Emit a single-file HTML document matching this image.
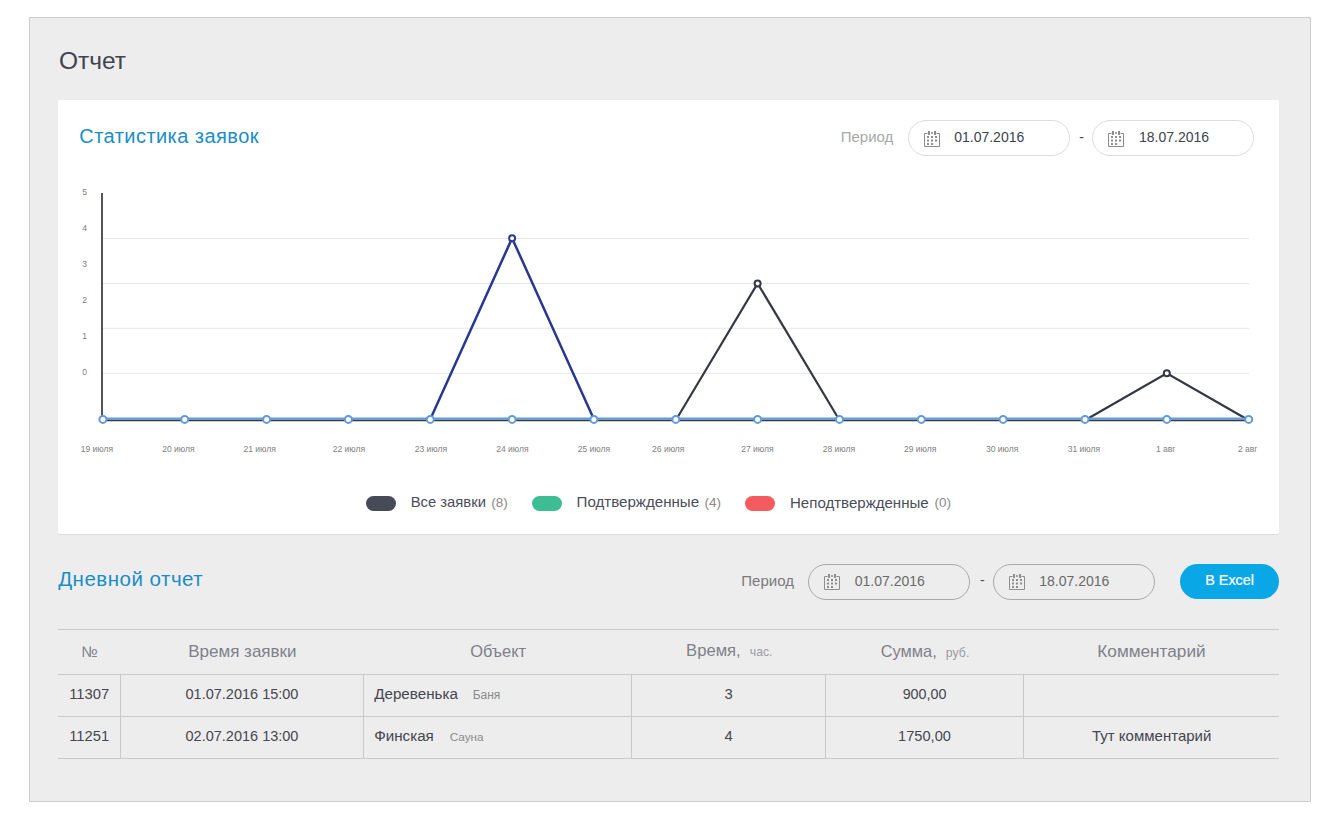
<!DOCTYPE html>
<html><head><meta charset="utf-8"><title>Отчет</title>
<style>
html,body{margin:0;padding:0;background:#fff;width:1340px;height:820px;overflow:hidden;font-family:"Liberation Sans", sans-serif;}
.t{position:absolute;white-space:pre;font-family:"Liberation Sans", sans-serif;}
.ic{position:absolute;}
.box{position:absolute;}
</style></head><body>
<div class="box" style="left:29px;top:17px;width:1280px;height:783px;background:#ededed;border:1px solid #cdcdcd;"></div>
<div class="t" style="left:59.00px;top:49.08px;font-size:24.5px;line-height:24.5px;color:#41444f;">Отчет</div>
<div class="box" style="left:58px;top:100px;width:1221px;height:434px;background:#fff;border-radius:2px;box-shadow:0 1px 1px rgba(0,0,0,0.07);"></div>
<div class="t" style="left:79.30px;top:125.70px;font-size:20px;line-height:20px;color:#1a8dc6;letter-spacing:0.45px;">Статистика заявок</div>
<div class="t" style="left:840.70px;top:128.55px;font-size:15px;line-height:15px;color:#a8a8a8;">Период</div>
<div class="box" style="left:908px;top:120px;width:160px;height:34px;border:1px solid #dcdcdc;border-radius:18px;"></div>
<svg class="ic" style="left:924px;top:131px" width="17" height="17" viewBox="0 0 17 17">
<path d="M3.5 2.5H0.5V15.5H15.5V2.5H12.5" fill="none" stroke="#8c8c8c" stroke-width="1"/>
<rect x="4" y="0" width="2" height="4" fill="#8c8c8c"/><rect x="7" y="1" width="2" height="2" fill="#8c8c8c" opacity="0.8"/><rect x="10" y="0" width="2" height="4" fill="#8c8c8c"/>
<g fill="#8c8c8c"><rect x="3" y="5" width="2" height="2"/><rect x="7" y="5" width="2" height="2"/><rect x="11" y="5" width="2" height="2"/>
<rect x="3" y="8.5" width="2" height="2"/><rect x="7" y="8.5" width="2" height="2"/><rect x="11" y="8.5" width="2" height="2"/>
<rect x="3" y="12" width="2" height="2"/><rect x="7" y="12" width="2" height="2"/></g></svg>
<div class="t" style="left:954.20px;top:130.30px;font-size:14px;line-height:14px;color:#3d4250;">01.07.2016</div>
<div class="t" style="left:1079.30px;top:129.60px;font-size:14px;line-height:14px;color:#3d4250;">-</div>
<div class="box" style="left:1092px;top:120px;width:160px;height:34px;border:1px solid #dcdcdc;border-radius:18px;"></div>
<svg class="ic" style="left:1108px;top:131px" width="17" height="17" viewBox="0 0 17 17">
<path d="M3.5 2.5H0.5V15.5H15.5V2.5H12.5" fill="none" stroke="#8c8c8c" stroke-width="1"/>
<rect x="4" y="0" width="2" height="4" fill="#8c8c8c"/><rect x="7" y="1" width="2" height="2" fill="#8c8c8c" opacity="0.8"/><rect x="10" y="0" width="2" height="4" fill="#8c8c8c"/>
<g fill="#8c8c8c"><rect x="3" y="5" width="2" height="2"/><rect x="7" y="5" width="2" height="2"/><rect x="11" y="5" width="2" height="2"/>
<rect x="3" y="8.5" width="2" height="2"/><rect x="7" y="8.5" width="2" height="2"/><rect x="11" y="8.5" width="2" height="2"/>
<rect x="3" y="12" width="2" height="2"/><rect x="7" y="12" width="2" height="2"/></g></svg>
<div class="t" style="left:1139.00px;top:130.30px;font-size:14px;line-height:14px;color:#3d4250;">18.07.2016</div>
<svg class="ic" style="left:0;top:0" width="1340" height="820" viewBox="0 0 1340 820">
<line x1="103" y1="238.5" x2="1249" y2="238.5" stroke="#e6e6e6" stroke-width="1"/>
<line x1="103" y1="283.5" x2="1249" y2="283.5" stroke="#e6e6e6" stroke-width="1"/>
<line x1="103" y1="328.3" x2="1249" y2="328.3" stroke="#e6e6e6" stroke-width="1"/>
<line x1="103" y1="373.3" x2="1249" y2="373.3" stroke="#e6e6e6" stroke-width="1"/>
<line x1="102" y1="193" x2="102" y2="420.2" stroke="#555" stroke-width="2"/>
<polyline points="675.8,420.2 757.6,283.4 839.5,420.2" fill="none" stroke="#353943" stroke-width="2.2" stroke-linejoin="miter"/>
<polyline points="1085.0,420.2 1166.8,373.3 1248.7,420.2" fill="none" stroke="#353943" stroke-width="2.2" stroke-linejoin="miter"/>
<polyline points="430.3,419.2 512.1,238.2 593.9,419.2" fill="none" stroke="#28378f" stroke-width="2.5"/>
<line x1="102.9" y1="420.3" x2="1248.66" y2="420.3" stroke="#353943" stroke-width="1.8"/>
<line x1="102.9" y1="418.59999999999997" x2="1248.66" y2="418.59999999999997" stroke="#5e9de0" stroke-width="2"/>
<circle cx="102.9" cy="419.4" r="3.5" fill="#fff" stroke="#6399da" stroke-width="2"/>
<circle cx="184.7" cy="419.4" r="3.5" fill="#fff" stroke="#6399da" stroke-width="2"/>
<circle cx="266.6" cy="419.4" r="3.5" fill="#fff" stroke="#6399da" stroke-width="2"/>
<circle cx="348.4" cy="419.4" r="3.5" fill="#fff" stroke="#6399da" stroke-width="2"/>
<circle cx="430.3" cy="419.4" r="3.5" fill="#fff" stroke="#6399da" stroke-width="2"/>
<circle cx="512.1" cy="419.4" r="3.5" fill="#fff" stroke="#6399da" stroke-width="2"/>
<circle cx="593.9" cy="419.4" r="3.5" fill="#fff" stroke="#6399da" stroke-width="2"/>
<circle cx="675.8" cy="419.4" r="3.5" fill="#fff" stroke="#6399da" stroke-width="2"/>
<circle cx="757.6" cy="419.4" r="3.5" fill="#fff" stroke="#6399da" stroke-width="2"/>
<circle cx="839.5" cy="419.4" r="3.5" fill="#fff" stroke="#6399da" stroke-width="2"/>
<circle cx="921.3" cy="419.4" r="3.5" fill="#fff" stroke="#6399da" stroke-width="2"/>
<circle cx="1003.1" cy="419.4" r="3.5" fill="#fff" stroke="#6399da" stroke-width="2"/>
<circle cx="1085.0" cy="419.4" r="3.5" fill="#fff" stroke="#6399da" stroke-width="2"/>
<circle cx="1166.8" cy="419.4" r="3.5" fill="#fff" stroke="#6399da" stroke-width="2"/>
<circle cx="1248.7" cy="419.4" r="3.5" fill="#fff" stroke="#6399da" stroke-width="2"/>
<circle cx="512.1" cy="238.2" r="3" fill="#fff" stroke="#2a3a92" stroke-width="2"/>
<circle cx="757.6" cy="283.4" r="3" fill="#fff" stroke="#353943" stroke-width="2"/>
<circle cx="1166.8" cy="373.3" r="3" fill="#fff" stroke="#353943" stroke-width="2"/>
</svg>
<div class="t" style="left:82.20px;top:187.97px;font-size:8.5px;line-height:8.5px;color:#7c7c7c;">5</div>
<div class="t" style="left:82.20px;top:223.97px;font-size:8.5px;line-height:8.5px;color:#7c7c7c;">4</div>
<div class="t" style="left:82.20px;top:259.97px;font-size:8.5px;line-height:8.5px;color:#7c7c7c;">3</div>
<div class="t" style="left:82.20px;top:296.47px;font-size:8.5px;line-height:8.5px;color:#7c7c7c;">2</div>
<div class="t" style="left:82.20px;top:332.47px;font-size:8.5px;line-height:8.5px;color:#7c7c7c;">1</div>
<div class="t" style="left:82.20px;top:368.47px;font-size:8.5px;line-height:8.5px;color:#7c7c7c;">0</div>
<div class="t" style="left:80.80px;top:445.38px;font-size:8.5px;line-height:8.5px;color:#808080;">19 июля</div>
<div class="t" style="left:162.30px;top:445.38px;font-size:8.5px;line-height:8.5px;color:#808080;">20 июля</div>
<div class="t" style="left:243.50px;top:445.38px;font-size:8.5px;line-height:8.5px;color:#808080;">21 июля</div>
<div class="t" style="left:332.70px;top:445.38px;font-size:8.5px;line-height:8.5px;color:#808080;">22 июля</div>
<div class="t" style="left:414.80px;top:445.38px;font-size:8.5px;line-height:8.5px;color:#808080;">23 июля</div>
<div class="t" style="left:496.30px;top:445.38px;font-size:8.5px;line-height:8.5px;color:#808080;">24 июля</div>
<div class="t" style="left:577.80px;top:445.38px;font-size:8.5px;line-height:8.5px;color:#808080;">25 июля</div>
<div class="t" style="left:652.10px;top:445.38px;font-size:8.5px;line-height:8.5px;color:#808080;">26 июля</div>
<div class="t" style="left:741.30px;top:445.38px;font-size:8.5px;line-height:8.5px;color:#808080;">27 июля</div>
<div class="t" style="left:822.80px;top:445.38px;font-size:8.5px;line-height:8.5px;color:#808080;">28 июля</div>
<div class="t" style="left:904.00px;top:445.38px;font-size:8.5px;line-height:8.5px;color:#808080;">29 июля</div>
<div class="t" style="left:986.00px;top:445.38px;font-size:8.5px;line-height:8.5px;color:#808080;">30 июля</div>
<div class="t" style="left:1067.80px;top:445.38px;font-size:8.5px;line-height:8.5px;color:#808080;">31 июля</div>
<div class="t" style="left:1156.00px;top:445.38px;font-size:8.5px;line-height:8.5px;color:#808080;">1 авг</div>
<div class="t" style="left:1237.90px;top:445.38px;font-size:8.5px;line-height:8.5px;color:#808080;">2 авг</div>
<div class="box" style="left:366px;top:496px;width:30px;height:15px;border-radius:8px;background:#474a57;"></div>
<div class="t" style="left:410.70px;top:494.72px;font-size:14.8px;line-height:14.8px;color:#4a4d5a;">Все заявки</div>
<div class="t" style="left:491.30px;top:495.82px;font-size:13.5px;line-height:13.5px;color:#8a8a8a;">(8)</div>
<div class="box" style="left:532px;top:496px;width:30px;height:15px;border-radius:8px;background:#3dbd94;"></div>
<div class="t" style="left:576.60px;top:494.47px;font-size:15.1px;line-height:15.1px;color:#4a4d5a;">Подтвержденные</div>
<div class="t" style="left:704.50px;top:495.82px;font-size:13.5px;line-height:13.5px;color:#8a8a8a;">(4)</div>
<div class="box" style="left:745px;top:496px;width:30px;height:15px;border-radius:8px;background:#f45b5e;"></div>
<div class="t" style="left:790.00px;top:494.50px;font-size:15.06px;line-height:15.06px;color:#4a4d5a;">Неподтвержденные</div>
<div class="t" style="left:934.60px;top:495.82px;font-size:13.5px;line-height:13.5px;color:#8a8a8a;">(0)</div>
<div class="t" style="left:58.20px;top:569.48px;font-size:20.5px;line-height:20.5px;color:#1a8dc6;letter-spacing:0.5px;">Дневной отчет</div>
<div class="t" style="left:741.30px;top:572.55px;font-size:15px;line-height:15px;color:#7a7a7a;">Период</div>
<div class="box" style="left:808px;top:564px;width:160px;height:34px;border:1px solid #a9a9a9;border-radius:18px;"></div>
<svg class="ic" style="left:824px;top:574px" width="17" height="17" viewBox="0 0 17 17">
<path d="M3.5 2.5H0.5V15.5H15.5V2.5H12.5" fill="none" stroke="#8f8f8f" stroke-width="1"/>
<rect x="4" y="0" width="2" height="4" fill="#8f8f8f"/><rect x="7" y="1" width="2" height="2" fill="#8f8f8f" opacity="0.8"/><rect x="10" y="0" width="2" height="4" fill="#8f8f8f"/>
<g fill="#8f8f8f"><rect x="3" y="5" width="2" height="2"/><rect x="7" y="5" width="2" height="2"/><rect x="11" y="5" width="2" height="2"/>
<rect x="3" y="8.5" width="2" height="2"/><rect x="7" y="8.5" width="2" height="2"/><rect x="11" y="8.5" width="2" height="2"/>
<rect x="3" y="12" width="2" height="2"/><rect x="7" y="12" width="2" height="2"/></g></svg>
<div class="t" style="left:854.80px;top:573.80px;font-size:14px;line-height:14px;color:#6a6a6a;">01.07.2016</div>
<div class="t" style="left:980.00px;top:573.10px;font-size:14px;line-height:14px;color:#555;">-</div>
<div class="box" style="left:993px;top:564px;width:160px;height:34px;border:1px solid #a9a9a9;border-radius:18px;"></div>
<svg class="ic" style="left:1009px;top:574px" width="17" height="17" viewBox="0 0 17 17">
<path d="M3.5 2.5H0.5V15.5H15.5V2.5H12.5" fill="none" stroke="#8f8f8f" stroke-width="1"/>
<rect x="4" y="0" width="2" height="4" fill="#8f8f8f"/><rect x="7" y="1" width="2" height="2" fill="#8f8f8f" opacity="0.8"/><rect x="10" y="0" width="2" height="4" fill="#8f8f8f"/>
<g fill="#8f8f8f"><rect x="3" y="5" width="2" height="2"/><rect x="7" y="5" width="2" height="2"/><rect x="11" y="5" width="2" height="2"/>
<rect x="3" y="8.5" width="2" height="2"/><rect x="7" y="8.5" width="2" height="2"/><rect x="11" y="8.5" width="2" height="2"/>
<rect x="3" y="12" width="2" height="2"/><rect x="7" y="12" width="2" height="2"/></g></svg>
<div class="t" style="left:1039.30px;top:573.80px;font-size:14px;line-height:14px;color:#6a6a6a;">18.07.2016</div>
<div class="box" style="left:1180px;top:564px;width:99px;height:35px;border-radius:18px;background:#0aa7e6;"></div>
<div class="t" style="left:1205.20px;top:573.06px;font-size:14.4px;line-height:14.4px;color:#ffffff;-webkit-text-stroke:0.2px #fff;">B Excel</div>
<div class="box" style="left:58px;top:629px;width:1221px;height:1px;background:#c9c9c9;"></div>
<div class="box" style="left:58px;top:674px;width:1221px;height:1px;background:#c9c9c9;"></div>
<div class="box" style="left:58px;top:716px;width:1221px;height:1px;background:#c9c9c9;"></div>
<div class="box" style="left:58px;top:758px;width:1221px;height:1px;background:#c9c9c9;"></div>
<div class="box" style="left:120px;top:675px;width:1px;height:83px;background:#c9c9c9;"></div>
<div class="box" style="left:363px;top:675px;width:1px;height:83px;background:#c9c9c9;"></div>
<div class="box" style="left:631px;top:675px;width:1px;height:83px;background:#c9c9c9;"></div>
<div class="box" style="left:825px;top:675px;width:1px;height:83px;background:#c9c9c9;"></div>
<div class="box" style="left:1023px;top:675px;width:1px;height:83px;background:#c9c9c9;"></div>
<div class="t" style="left:-110.30px;width:400px;text-align:center;top:644.31px;font-size:15.4px;line-height:15.4px;color:#7e808a;">№</div>
<div class="t" style="left:42.40px;width:400px;text-align:center;top:642.95px;font-size:17px;line-height:17px;color:#7e808a;">Время заявки</div>
<div class="t" style="left:298.20px;width:400px;text-align:center;top:643.46px;font-size:16.4px;line-height:16.4px;color:#7e808a;">Объект</div>
<div class="t" style="left:529.30px;width:400px;text-align:center;top:643.29px;font-size:16.6px;line-height:16.6px;color:#7e808a;">Время,  <span style="font-size:12.2px;color:#9c9ca4">час.</span></div>
<div class="t" style="left:725.00px;width:400px;text-align:center;top:643.46px;font-size:16.4px;line-height:16.4px;color:#7e808a;">Сумма,  <span style="font-size:12.3px;color:#9c9ca4">руб.</span></div>
<div class="t" style="left:951.50px;width:400px;text-align:center;top:642.78px;font-size:17.2px;line-height:17.2px;color:#7e808a;">Комментарий</div>
<div class="t" style="left:-110.80px;width:400px;text-align:center;top:686.72px;font-size:14.8px;line-height:14.8px;color:#45464f;">11307</div>
<div class="t" style="left:42.00px;width:400px;text-align:center;top:686.97px;font-size:14.5px;line-height:14.5px;color:#45464f;">01.07.2016 15:00</div>
<div class="t" style="left:374.20px;top:686.38px;font-size:15.2px;line-height:15.2px;color:#45464f;">Деревенька</div>
<div class="t" style="left:472.70px;top:689.10px;font-size:12px;line-height:12px;color:#8a8a8a;">Баня</div>
<div class="t" style="left:528.70px;width:400px;text-align:center;top:686.72px;font-size:14.8px;line-height:14.8px;color:#45464f;">3</div>
<div class="t" style="left:724.50px;width:400px;text-align:center;top:687.14px;font-size:14.3px;line-height:14.3px;color:#45464f;">900,00</div>
<div class="t" style="left:-110.80px;width:400px;text-align:center;top:728.62px;font-size:14.8px;line-height:14.8px;color:#45464f;">11251</div>
<div class="t" style="left:42.00px;width:400px;text-align:center;top:728.88px;font-size:14.5px;line-height:14.5px;color:#45464f;">02.07.2016 13:00</div>
<div class="t" style="left:374.20px;top:728.28px;font-size:15.2px;line-height:15.2px;color:#45464f;">Финская</div>
<div class="t" style="left:449.80px;top:731.25px;font-size:11.7px;line-height:11.7px;color:#8a8a8a;">Сауна</div>
<div class="t" style="left:528.70px;width:400px;text-align:center;top:728.62px;font-size:14.8px;line-height:14.8px;color:#45464f;">4</div>
<div class="t" style="left:724.50px;width:400px;text-align:center;top:728.79px;font-size:14.6px;line-height:14.6px;color:#45464f;">1750,00</div>
<div class="t" style="left:951.70px;width:400px;text-align:center;top:728.45px;font-size:15px;line-height:15px;color:#45464f;">Тут комментарий</div>
</body></html>
